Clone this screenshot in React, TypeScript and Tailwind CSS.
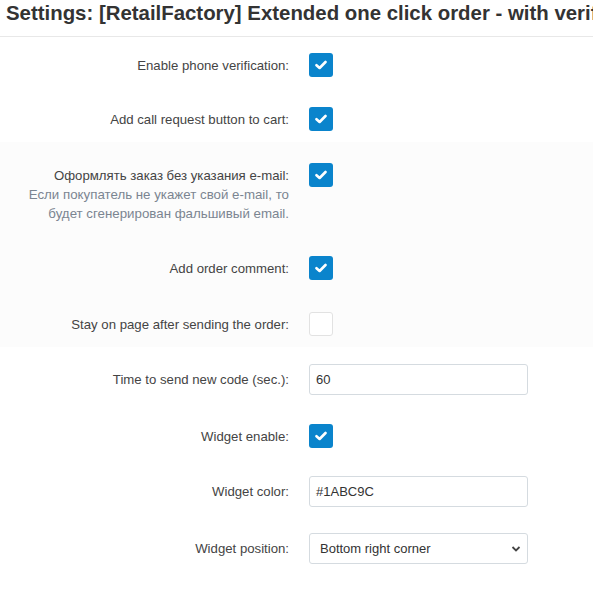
import type { ReactNode } from "react";

const font = { fontFamily: '"Liberation Sans", Arial, "Noto Sans", sans-serif' };

function Check({ on }: { on: boolean }) {
  return on ? (
    <div className="w-6 h-6 shrink-0 rounded-[3px] bg-[#0a84cc] flex items-center justify-center">
      <svg width="12" height="10" viewBox="0 0 12 10">
        <path d="M1.5 5.2 L4.6 8 L10.5 2" fill="none" stroke="#fff" strokeWidth="2.6" strokeLinecap="round" strokeLinejoin="round" />
      </svg>
    </div>
  ) : (
    <div className="w-6 h-6 shrink-0 rounded-[3px] bg-white border border-[#e2e2e2]" />
  );
}

function Row({ label, children, className = "" }: { label: ReactNode; children: ReactNode; className?: string }) {
  return (
    <div className={`flex items-center ${className}`}>
      <div className="w-[289px] text-right text-[13.2px] text-[#444] leading-[19px]">{label}</div>
      <div className="ml-5">{children}</div>
    </div>
  );
}

function TextInput({ value }: { value: string }) {
  return (
    <div className="w-[219px] h-[31px] border border-[#d5dbe0] rounded-[3px] bg-white flex items-center pl-[6px] text-[13px] text-[#333]">
      {value}
    </div>
  );
}

export default function App() {
  return (
    <div className="w-[593px] h-[610px] bg-white overflow-hidden" style={font}>
      <div className="h-[37px] border-b border-[#e8e8e8] pl-[6px] whitespace-nowrap overflow-hidden">
        <h1 className="text-[20.4px] font-bold text-[#333] leading-[26px]">
          Settings: [RetailFactory] Extended one click order - with verifi
        </h1>
      </div>

      <div className="pt-4 pb-[11px] flex flex-col gap-[30px]">
        <Row label="Enable phone verification:">
          <Check on />
        </Row>
        <Row label="Add call request button to cart:">
          <Check on />
        </Row>
      </div>

      <div className="bg-[#fcfcfc] pt-[21px] pb-[11px]">
        <div className="flex items-start">
          <div className="w-[289px] text-right text-[13.2px] leading-[19px] pt-[3px]">
            <div className="text-[#444]">Оформлять заказ без указания e-mail:</div>
            <div className="text-[#7b8591] text-[13.3px]">
              Если покупатель не укажет свой e-mail, то
              <br />
              будет сгенерирован фальшивый email.
            </div>
          </div>
          <div className="ml-5">
            <Check on />
          </div>
        </div>
        <Row label="Add order comment:" className="mt-[33px]">
          <Check on />
        </Row>
        <Row label="Stay on page after sending the order:" className="mt-8">
          <Check on={false} />
        </Row>
      </div>

      <div className="pt-[17px] flex flex-col">
        <Row label="Time to send new code (sec.):">
          <TextInput value="60" />
        </Row>
        <Row label="Widget enable:" className="mt-[29px]">
          <Check on />
        </Row>
        <Row label="Widget color:" className="mt-7">
          <TextInput value="#1ABC9C" />
        </Row>
        <Row label="Widget position:" className="mt-[26px]">
          <div className="w-[219px] h-[31px] border border-[#d5dbe0] rounded-[3px] bg-white flex items-center justify-between pl-[10px] pr-[6px] text-[13px] text-[#333]">
            <span>Bottom right corner</span>
            <svg width="10" height="8" viewBox="0 0 10 8">
              <path d="M1.5 2 L5 5.5 L8.5 2" fill="none" stroke="#444" strokeWidth="1.8" />
            </svg>
          </div>
        </Row>
      </div>
    </div>
  );
}
